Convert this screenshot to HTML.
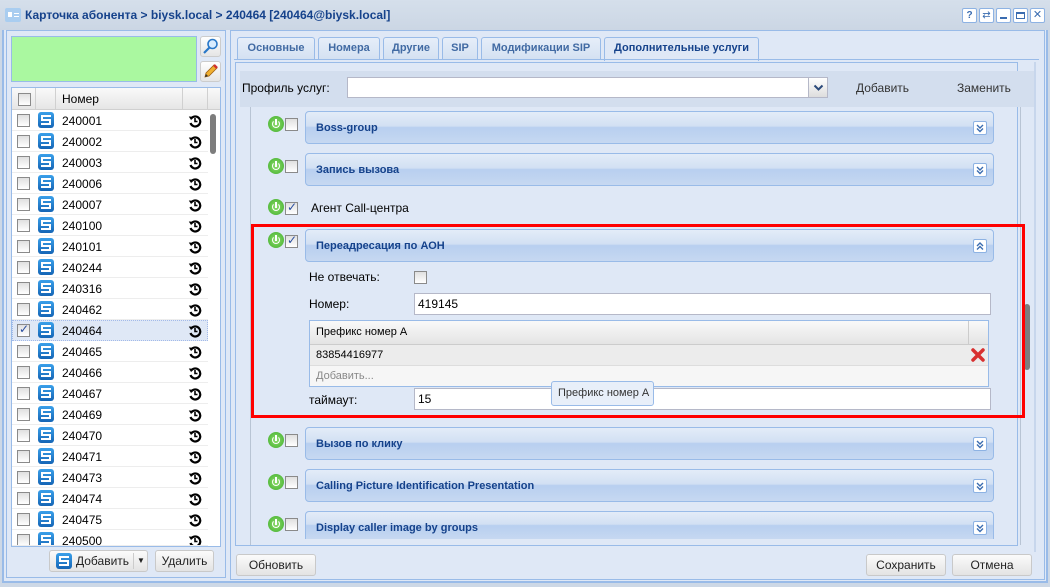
<!DOCTYPE html>
<html><head><meta charset="utf-8"><style>
*{box-sizing:border-box;margin:0;padding:0}
body{width:1050px;height:587px;overflow:hidden;background:#cdd8e6;font-family:"Liberation Sans","DejaVu Sans",sans-serif;font-size:12px;color:#000;position:relative}
.a{position:absolute}
.cb{position:absolute;width:13px;height:13px;border:1px solid #8a8a8a;background:linear-gradient(#e0e0e0,#fff);}
.cb.ck::after{content:"✓";position:absolute;left:1px;top:-3px;font-size:12px;color:#2a4fa0;font-weight:bold}
.sic{position:absolute;width:16px;height:16px;border-radius:3px;background:linear-gradient(#3aa0ea,#1565b5);}
.sic::after{content:"";position:absolute;left:3px;top:3px;width:10px;height:10px;background:
linear-gradient(#fff,#fff) 0 0/10px 2px no-repeat,linear-gradient(#fff,#fff) 0 4px/10px 2px no-repeat,linear-gradient(#fff,#fff) 0 8px/10px 2px no-repeat,linear-gradient(#fff,#fff) 0 0/2px 6px no-repeat,linear-gradient(#fff,#fff) 8px 4px/2px 6px no-repeat}
.row{position:absolute;left:12px;width:196px;height:21px;border-bottom:1px solid #ededed;background:#fff}
.row .n{position:absolute;left:50px;top:4px;font-size:12px}
.row svg.hi{position:absolute;left:176px;top:4px}
.panel{position:absolute;left:305px;width:689px;height:33px;border:1px solid #99bbe8;border-radius:4px;background:linear-gradient(#e3ecf8 0%,#d2e0f3 45%,#b8cff0 50%,#c6d8f1 100%)}
.panel b{position:absolute;left:10px;top:10px;font-size:11px;color:#15428b}
.tg{position:absolute;right:6px;top:9px;width:14px;height:14px;border:1px solid #8db2e3;border-radius:2px;background:#fff}
.pw{position:absolute;width:16px;height:16px;border-radius:50%;background:radial-gradient(#8fdc6e,#3fae2a);}
.pw::after{content:"";position:absolute;left:4px;top:4px;width:6px;height:6px;border:1.5px solid #fff;border-top-color:transparent;border-radius:50%}
.pw::before{content:"";position:absolute;left:7.3px;top:2.5px;width:1.5px;height:6px;background:#fff;z-index:1}
.btn{position:absolute;height:22px;border:1px solid #c9c9c9;border-radius:3px;background:linear-gradient(#fbfbfb,#e3e3e3);text-align:center;line-height:20px;font-size:12px;color:#222}
.tab{position:absolute;top:37px;height:22px;border:1px solid #99bbe8;border-bottom:none;border-radius:3px 3px 0 0;background:linear-gradient(#e6eef9,#d4e1f2);font-weight:bold;font-size:11px;color:#416aa3;text-align:center;line-height:21px}
.inp{position:absolute;background:#fff;border:1px solid #b5b8c8}
</style></head><body>
<svg width="0" height="0" style="position:absolute"><defs>
<symbol id="dn" viewBox="0 0 12 12"><path d="M3 3l3 3 3-3M3 6.5l3 3 3-3" fill="none" stroke="#3a6cb0" stroke-width="1.4"/></symbol>
<symbol id="up" viewBox="0 0 12 12"><path d="M3 6l3-3 3 3M3 9.5l3-3 3 3" fill="none" stroke="#3a6cb0" stroke-width="1.4"/></symbol>
<symbol id="hs" viewBox="0 0 14 14"><path d="M3.2 4.5A5 5 0 1 1 2.5 9" fill="none" stroke="#000" stroke-width="2.2"/><path d="M0.8 2.5l4.2 0.2-1.8 3.6z" fill="#000"/><path d="M7 4v3.5h2.5" fill="none" stroke="#000" stroke-width="1.6"/></symbol>
</defs></svg>
<!-- title bar -->
<div class="a" style="left:0;top:0;width:1050px;height:30px;background:linear-gradient(#d5dfeb,#cbd6e4)"></div>
<div class="a" style="left:5px;top:8px;width:16px;height:14px;background:#a9cdf0;border-radius:2px"><div class="a" style="left:3px;top:4px;width:4px;height:5px;background:#fff"></div><div class="a" style="left:9px;top:5px;width:5px;height:1px;background:#fff"></div><div class="a" style="left:9px;top:8px;width:5px;height:1px;background:#fff"></div></div>
<div class="a" style="left:25px;top:8px;font-size:12px;font-weight:bold;color:#15428b">Карточка абонента &gt; biysk.local &gt; 240464 [240464@biysk.local]</div>
<div class="a" style="left:962px;top:8px;display:flex;gap:2px">
<div style="width:15px;height:15px;border:1px solid #8db2e3;border-radius:2px;background:#fff;color:#3a6cb0;font-size:10px;font-weight:bold;text-align:center;line-height:13px">?</div>
<div style="width:15px;height:15px;border:1px solid #8db2e3;border-radius:2px;background:#fff;color:#3a6cb0;font-size:10px;text-align:center;line-height:13px">⇄</div>
<div style="width:15px;height:15px;border:1px solid #8db2e3;border-radius:2px;background:#fff;position:relative"><div class="a" style="left:3px;top:8px;width:7px;height:2px;background:#3a6cb0"></div></div>
<div style="width:15px;height:15px;border:1px solid #8db2e3;border-radius:2px;background:#fff;position:relative"><div class="a" style="left:2px;top:3px;width:9px;height:7px;border:1px solid #3a6cb0;border-top-width:2px"></div></div>
<div style="width:15px;height:15px;border:1px solid #8db2e3;border-radius:2px;background:#fff;color:#3a6cb0;font-size:11px;text-align:center;line-height:13px">✕</div>
</div>
<!-- window body -->
<div class="a" style="left:2px;top:30px;width:1046px;height:553px;background:#dfe8f6;border:2px solid #99bbe8;border-top:none"></div>
<!-- left panel -->
<div class="a" style="left:6px;top:30px;width:220px;height:548px;border:1px solid #99bbe8;background:#dfe8f6"></div>
<div class="a" style="left:11px;top:36px;width:186px;height:46px;background:#aaf8a0;border:1px solid #99bbe8"></div>
<div class="a" style="left:200px;top:36px;width:21px;height:21px;border:1px solid #ccc;border-radius:3px;background:linear-gradient(#fff,#e5e5e5)"><svg width="19" height="19" viewBox="0 0 19 19"><circle cx="11.5" cy="7" r="4.5" fill="#d8ecff" stroke="#2a78c8" stroke-width="1.6"/><path d="M8.5 10.5L3 16" stroke="#2a78c8" stroke-width="2.2"/></svg></div>
<div class="a" style="left:200px;top:61px;width:21px;height:21px;border:1px solid #ccc;border-radius:3px;background:linear-gradient(#fff,#e5e5e5)"><svg width="19" height="19" viewBox="0 0 19 19"><path d="M4 15l1-4 8-8 3 3-8 8z" fill="#f0b030" stroke="#a06010" stroke-width=".8"/><path d="M13 3l3 3" stroke="#d03030" stroke-width="2.5"/><path d="M4 15l1-3 2 2z" fill="#333"/></svg></div>
<div class="a" style="left:11px;top:87px;width:210px;height:460px;border:1px solid #99bbe8;background:#fff;overflow:hidden">
<div class="a" style="left:0;top:0;width:208px;height:22px;background:linear-gradient(#f9f9f9,#e6e6e6);border-bottom:1px solid #d0d0d0"></div>
<div class="a" style="left:23px;top:0;width:1px;height:22px;background:#d0d0d0"></div>
<div class="a" style="left:43px;top:0;width:1px;height:22px;background:#d0d0d0"></div>
<div class="a" style="left:170px;top:0;width:1px;height:22px;background:#d0d0d0"></div>
<div class="a" style="left:195px;top:0;width:1px;height:22px;background:#d0d0d0"></div>
<div class="cb" style="left:6px;top:5px"></div>
<div class="a" style="left:50px;top:4px;font-size:12px">Номер</div>
<div class="a" style="left:198px;top:26px;width:6px;height:40px;border-radius:3px;background:#7d7d7d"></div>
</div>
<!-- rows -->
<div class="row" style="top:110px"><div class="cb" style="left:5px;top:4px"></div><div class="sic" style="left:26px;top:2px"></div><span class="n">240001</span><svg class="hi" width="14" height="14"><use href="#hs"/></svg></div>
<div class="row" style="top:131px"><div class="cb" style="left:5px;top:4px"></div><div class="sic" style="left:26px;top:2px"></div><span class="n">240002</span><svg class="hi" width="14" height="14"><use href="#hs"/></svg></div>
<div class="row" style="top:152px"><div class="cb" style="left:5px;top:4px"></div><div class="sic" style="left:26px;top:2px"></div><span class="n">240003</span><svg class="hi" width="14" height="14"><use href="#hs"/></svg></div>
<div class="row" style="top:173px"><div class="cb" style="left:5px;top:4px"></div><div class="sic" style="left:26px;top:2px"></div><span class="n">240006</span><svg class="hi" width="14" height="14"><use href="#hs"/></svg></div>
<div class="row" style="top:194px"><div class="cb" style="left:5px;top:4px"></div><div class="sic" style="left:26px;top:2px"></div><span class="n">240007</span><svg class="hi" width="14" height="14"><use href="#hs"/></svg></div>
<div class="row" style="top:215px"><div class="cb" style="left:5px;top:4px"></div><div class="sic" style="left:26px;top:2px"></div><span class="n">240100</span><svg class="hi" width="14" height="14"><use href="#hs"/></svg></div>
<div class="row" style="top:236px"><div class="cb" style="left:5px;top:4px"></div><div class="sic" style="left:26px;top:2px"></div><span class="n">240101</span><svg class="hi" width="14" height="14"><use href="#hs"/></svg></div>
<div class="row" style="top:257px"><div class="cb" style="left:5px;top:4px"></div><div class="sic" style="left:26px;top:2px"></div><span class="n">240244</span><svg class="hi" width="14" height="14"><use href="#hs"/></svg></div>
<div class="row" style="top:278px"><div class="cb" style="left:5px;top:4px"></div><div class="sic" style="left:26px;top:2px"></div><span class="n">240316</span><svg class="hi" width="14" height="14"><use href="#hs"/></svg></div>
<div class="row" style="top:299px"><div class="cb" style="left:5px;top:4px"></div><div class="sic" style="left:26px;top:2px"></div><span class="n">240462</span><svg class="hi" width="14" height="14"><use href="#hs"/></svg></div>
<div class="row" style="top:320px;background:#dfe8f6;border:1px dotted #a3bae9"><div class="cb ck" style="left:4px;top:3px"></div><div class="sic" style="left:25px;top:1px"></div><span class="n" style="left:49px;top:3px">240464</span><svg class="hi" width="14" height="14" style="left:175px;top:3px"><use href="#hs"/></svg></div>
<div class="row" style="top:341px"><div class="cb" style="left:5px;top:4px"></div><div class="sic" style="left:26px;top:2px"></div><span class="n">240465</span><svg class="hi" width="14" height="14"><use href="#hs"/></svg></div>
<div class="row" style="top:362px"><div class="cb" style="left:5px;top:4px"></div><div class="sic" style="left:26px;top:2px"></div><span class="n">240466</span><svg class="hi" width="14" height="14"><use href="#hs"/></svg></div>
<div class="row" style="top:383px"><div class="cb" style="left:5px;top:4px"></div><div class="sic" style="left:26px;top:2px"></div><span class="n">240467</span><svg class="hi" width="14" height="14"><use href="#hs"/></svg></div>
<div class="row" style="top:404px"><div class="cb" style="left:5px;top:4px"></div><div class="sic" style="left:26px;top:2px"></div><span class="n">240469</span><svg class="hi" width="14" height="14"><use href="#hs"/></svg></div>
<div class="row" style="top:425px"><div class="cb" style="left:5px;top:4px"></div><div class="sic" style="left:26px;top:2px"></div><span class="n">240470</span><svg class="hi" width="14" height="14"><use href="#hs"/></svg></div>
<div class="row" style="top:446px"><div class="cb" style="left:5px;top:4px"></div><div class="sic" style="left:26px;top:2px"></div><span class="n">240471</span><svg class="hi" width="14" height="14"><use href="#hs"/></svg></div>
<div class="row" style="top:467px"><div class="cb" style="left:5px;top:4px"></div><div class="sic" style="left:26px;top:2px"></div><span class="n">240473</span><svg class="hi" width="14" height="14"><use href="#hs"/></svg></div>
<div class="row" style="top:488px"><div class="cb" style="left:5px;top:4px"></div><div class="sic" style="left:26px;top:2px"></div><span class="n">240474</span><svg class="hi" width="14" height="14"><use href="#hs"/></svg></div>
<div class="row" style="top:509px"><div class="cb" style="left:5px;top:4px"></div><div class="sic" style="left:26px;top:2px"></div><span class="n">240475</span><svg class="hi" width="14" height="14"><use href="#hs"/></svg></div>
<div class="row" style="top:530px;height:16px;overflow:hidden"><div class="cb" style="left:5px;top:4px"></div><div class="sic" style="left:26px;top:2px"></div><span class="n">240500</span><svg class="hi" width="14" height="14"><use href="#hs"/></svg></div>
<div class="btn" style="left:49px;top:550px;width:99px"><div class="sic" style="left:6px;top:2px"></div><span style="position:absolute;left:26px">Добавить</span><div class="a" style="left:83px;top:2px;width:1px;height:16px;background:#ccc"></div><span style="position:absolute;left:87px;font-size:8px">▼</span></div>
<div class="btn" style="left:155px;top:550px;width:59px">Удалить</div>
<!-- right panel -->
<div class="a" style="left:230px;top:30px;width:815px;height:550px;border:1px solid #99bbe8;background:#dfe8f6"></div>
<div class="tab" style="left:237px;width:78px">Основные</div>
<div class="tab" style="left:318px;width:62px">Номера</div>
<div class="tab" style="left:383px;width:56px">Другие</div>
<div class="tab" style="left:442px;width:36px">SIP</div>
<div class="tab" style="left:481px;width:120px">Модификации SIP</div>
<div class="tab" style="left:604px;width:155px;background:#dfe8f6;color:#15428b;height:24px">Дополнительные услуги</div>
<div class="a" style="left:234px;top:59px;width:805px;height:1px;background:#99bbe8"></div>
<div class="a" style="left:235px;top:62px;width:783px;height:484px;border:1px solid #99bbe8;background:#dfe8f6"></div>
<div class="a" style="left:240px;top:71px;width:794px;height:36px;background:#d3deee"></div>
<div class="a" style="left:242px;top:81px;font-size:12px">Профиль услуг:</div>
<div class="inp" style="left:347px;top:77px;width:481px;height:21px"></div>
<div class="a" style="left:808px;top:78px;width:19px;height:19px;background:linear-gradient(#fff,#ddd);border-left:1px solid #b5b8c8"><svg width="19" height="19"><path d="M5.5 7.5l4 4 4-4" fill="none" stroke="#2b4a7a" stroke-width="2"/></svg></div>
<div class="a" style="left:856px;top:81px;color:#333">Добавить</div>
<div class="a" style="left:957px;top:81px;color:#333">Заменить</div>
<div class="a" style="left:250px;top:107px;width:1px;height:438px;background:#b8c4d4"></div>
<div class="a" style="left:1020px;top:107px;width:1px;height:438px;background:#b8c4d4"></div>
<div class="a" style="left:1024px;top:304px;width:6px;height:66px;border-radius:3px;background:#7d7d7d"></div>
<div class="a" style="left:1034px;top:62px;width:2px;height:490px;background:#c7d6ec"></div>

<div class="pw" style="left:268px;top:116px"></div><div class="cb" style="left:285px;top:118px"></div>
<div class="panel" style="top:111px"><b>Boss-group</b><div class="tg"><svg width="12" height="12"><use href="#dn"/></svg></div></div>
<div class="pw" style="left:268px;top:158px"></div><div class="cb" style="left:285px;top:160px"></div>
<div class="panel" style="top:153px"><b>Запись вызова</b><div class="tg"><svg width="12" height="12"><use href="#dn"/></svg></div></div>
<div class="pw" style="left:268px;top:199px"></div><div class="cb ck" style="left:285px;top:202px"></div>
<div class="a" style="left:311px;top:201px;font-size:12px">Агент Call-центра</div>

<div class="a" style="left:251px;top:224px;width:774px;height:194px;border:3px solid #f00"></div>
<div class="pw" style="left:268px;top:232px"></div><div class="cb ck" style="left:285px;top:235px"></div>
<div class="panel" style="top:229px;left:305px"><b>Переадресация по АОН</b><div class="tg"><svg width="12" height="12"><use href="#up"/></svg></div></div>
<div class="a" style="left:309px;top:270px">Не отвечать:</div>
<div class="cb" style="left:414px;top:271px"></div>
<div class="a" style="left:309px;top:297px">Номер:</div>
<div class="inp" style="left:414px;top:293px;width:577px;height:22px"><span style="position:absolute;left:3px;top:3px">419145</span></div>
<div class="a" style="left:309px;top:320px;width:680px;height:67px;border:1px solid #99bbe8;background:#f6f6f6">
<div class="a" style="left:0;top:0;width:678px;height:24px;background:linear-gradient(#f9f9f9,#e4e4e4);border-bottom:1px solid #ccc"></div>
<div class="a" style="left:658px;top:0;width:1px;height:24px;background:#ccc"></div>
<div class="a" style="left:6px;top:5px;font-size:11px">Префикс номер А</div>
<div class="a" style="left:0;top:24px;width:678px;height:21px;background:#ececec;border-bottom:1px solid #ddd"></div>
<div class="a" style="left:6px;top:28px;font-size:11px">83854416977</div>
<svg class="a" style="left:660px;top:26px" width="16" height="16"><path d="M3 3l10 10M13 3L3 13" stroke="#d83030" stroke-width="3.5" stroke-linecap="round"/></svg>
<div class="a" style="left:6px;top:49px;font-size:11px;color:#888">Добавить...</div>
</div>
<div class="a" style="left:309px;top:393px">таймаут:</div>
<div class="inp" style="left:414px;top:388px;width:577px;height:22px"><span style="position:absolute;left:3px;top:3px">15</span></div>
<div class="a" style="left:551px;top:381px;width:103px;height:25px;border:1px solid #99bbe8;border-radius:3px;background:#e8eff9;font-size:11px;color:#333;line-height:23px;padding-left:6px">Префикс номер А</div>

<div class="pw" style="left:268px;top:432px"></div><div class="cb" style="left:285px;top:434px"></div>
<div class="panel" style="top:427px"><b>Вызов по клику</b><div class="tg"><svg width="12" height="12"><use href="#dn"/></svg></div></div>
<div class="pw" style="left:268px;top:474px"></div><div class="cb" style="left:285px;top:476px"></div>
<div class="panel" style="top:469px"><b>Calling Picture Identification Presentation</b><div class="tg"><svg width="12" height="12"><use href="#dn"/></svg></div></div>
<div class="pw" style="left:268px;top:516px"></div><div class="cb" style="left:285px;top:518px"></div>
<div class="panel" style="top:511px;height:28px;border-bottom:none;border-radius:4px 4px 0 0"><b>Display caller image by groups</b><div class="tg"><svg width="12" height="12"><use href="#dn"/></svg></div></div>

<div class="btn" style="left:236px;top:554px;width:80px">Обновить</div>
<div class="btn" style="left:866px;top:554px;width:80px">Сохранить</div>
<div class="btn" style="left:952px;top:554px;width:80px">Отмена</div>
</body></html>
